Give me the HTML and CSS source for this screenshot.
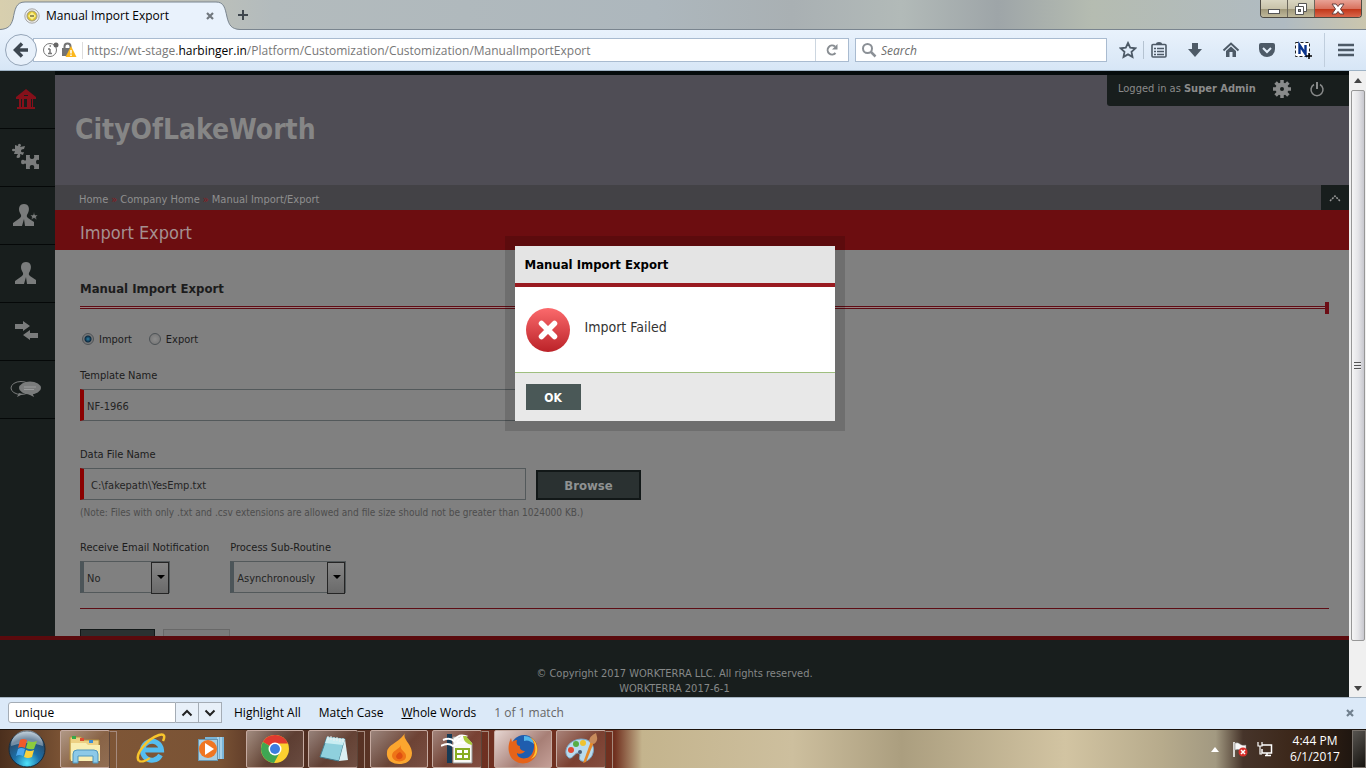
FILE: index.html
```html
<!DOCTYPE html>
<html lang="en">

<head>
    <meta charset="UTF-8">
    <meta name="viewport" content="width=device-width, initial-scale=1.0">
    <title>Manual Import Export</title>
    <link rel="stylesheet" href="styles.css">
</head>

<body>
    <div class="titlebar">
        <div class="tab">
            <svg class="tab-shape" viewBox="0 0 248 30" width="248" height="30">
                <path d="M0 29.5C8 29 11 26 13 19C15 9 16 2 25 2H216C224 2 225 8 227 17C229 25 231 29 240 29.5H248V30H0Z" fill="#e9f2fc" />
                <path d="M0 29.5C8 29 11 26 13 19C15 9 16 2 25 2H216C224 2 225 8 227 17C229 25 231 29 240 29.5H248" fill="none" stroke="#7a858f" />
            </svg>
            <svg class="favicon" viewBox="0 0 16 16" width="16" height="16">
                <circle cx="8" cy="8" r="7.200" fill="#ececea" stroke="#a7a7a7" />
                <circle cx="8" cy="8" r="5" fill="#e0c62c" stroke="#9c9880" />
                <path d="M8 4L12 8L8 12L4 8Z" fill="#f9ee8a" />
                <path d="M6 8H10" stroke="#77713f" stroke-width="1.500" />
            </svg>
            <span class="tab-title">Manual Import Export</span>
            <button class="plain" aria-label="Close tab"><svg viewBox="0 0 10 10" width="10" height="10"><path d="M2 2L8 8M8 2L2 8" stroke="#71787e" stroke-width="2.2" /></svg></button>
        </div>
        <button class="plain new-tab" aria-label="New tab"><svg viewBox="0 0 12 12" width="12" height="12"><path d="M6 1V11M1 6H11" stroke="#3e464d" stroke-width="2" /></svg></button>
        <div class="window-buttons">
            <button aria-label="Minimize"><svg viewBox="0 0 14 14" width="14" height="14"><rect x="1.500" y="7.500" width="11" height="4" fill="#fff" stroke="#555" /></svg></button>
            <button aria-label="Restore"><svg viewBox="0 0 14 14" width="14" height="14"><path d="M4.500 1.500H12.500V9.500H4.500Z" fill="#fff" stroke="#555" /><path d="M1.500 4.500H9.500V12.500H1.500Z" fill="#fff" stroke="#555" /><rect x="4.500" y="7.500" width="2" height="2" fill="#999" stroke="#555" /></svg></button>
            <button class="win-close" aria-label="Close"><svg viewBox="0 0 14 14" width="14" height="14"><path d="M1 2H5L7 4.500L9 2H13L9.500 7L13 12H9L7 9.500L5 12H1L4.500 7Z" fill="#fff" stroke="#664040" /></svg></button>
        </div>
    </div>

    <div class="navbar">
        <button class="back" aria-label="Back"><svg viewBox="0 0 16 16" width="16" height="16"><path d="M9 1.500L2.500 8L9 14.500M3 8H15" fill="none" stroke="#3c4650" stroke-width="3.500" /></svg></button>
        <div class="urlbar">
            <svg viewBox="0 0 16 16" width="16" height="16">
                <circle cx="7" cy="8" r="6.500" fill="none" stroke="#777" />
                <path d="M7 7V12M5 7H7M5 11.500H9M6.500 4H8" stroke="#777" stroke-width="1.500" />
                <circle cx="13" cy="3" r="2.500" fill="#666" />
            </svg>
            <svg class="lock" viewBox="0 0 16 16" width="16" height="16">
                <path d="M3.500 7V4.500A3 3 0 0 1 9.500 4.500V7" fill="none" stroke="#737373" stroke-width="2" />
                <rect x="1" y="6" width="10" height="8" fill="#737373" />
                <path d="M10 4L15.500 15H4.500Z" fill="#fbb71c" />
                <path d="M10 8V11.500M10 12.500V14" stroke="#fff" stroke-width="1.500" />
            </svg>
            <div class="url">https://wt-stage.<b>harbinger.in</b>/Platform/Customization/Customization/ManualImportExport</div>
            <button class="plain reload" aria-label="Reload"><svg viewBox="0 0 14 14" width="14" height="14"><path d="M10.500 10A4.500 4.500 0 1 1 10 3.500" fill="none" stroke="#888d92" stroke-width="2" /><path d="M7 6.500H12.500V1Z" fill="#888d92" /></svg></button>
        </div>
        <div class="searchbar">
            <svg viewBox="0 0 16 16" width="16" height="16"><circle cx="6.500" cy="6.500" r="4.500" fill="none" stroke="#8b9096" stroke-width="2" /><path d="M10 10L14.500 14.500" stroke="#8b9096" stroke-width="2.500" /></svg>
            <input type="text" placeholder="Search" aria-label="Search">
        </div>
        <div class="tools">
            <button class="plain" aria-label="Bookmark"><svg viewBox="0 0 18 18" width="18" height="18"><path d="M9 2L11.200 6.700L16.300 7.300L12.500 10.800L13.500 15.900L9 13.400L4.500 15.900L5.500 10.800L1.700 7.300L6.800 6.700Z" fill="none" stroke="#4d5a67" stroke-width="1.800" /></svg></button>
            <button class="plain list" aria-label="Show bookmarks"><svg viewBox="0 0 18 18" width="18" height="18"><path d="M3 3.500H15Q16 3.500 16 4.500V15Q16 16 15 16H3Q2 16 2 15V4.500Q2 3.500 3 3.500Z" fill="#e3eefa" stroke="#4d5a67" stroke-width="1.600" /><path d="M6 4V3Q6 1 9 1T12 3V4Z" fill="#4d5a67" /><path d="M4 7.500H6M7 7.500H14M4 10.500H6M7 10.500H14M4 13.500H6M7 13.500H14" stroke="#4d5a67" stroke-width="1.500" /></svg></button>
            <button class="plain" aria-label="Downloads"><svg viewBox="0 0 18 18" width="18" height="18"><path d="M6 2H12V8H16L9 16L2 8H6Z" fill="#4d5a67" /></svg></button>
            <button class="plain" aria-label="Home"><svg viewBox="0 0 18 18" width="18" height="18"><path d="M1.500 9.500L9 2.500L16.500 9.500" fill="none" stroke="#4d5a67" stroke-width="2" /><path d="M4 10L9 5.500L14 10V16H10.500V11H7.500V16H4Z" fill="#4d5a67" /></svg></button>
            <button class="plain" aria-label="Pocket"><svg viewBox="0 0 18 18" width="18" height="18"><path d="M3 2H15Q17 2 17 4V8A8 8 0 0 1 1 8V4Q1 2 3 2Z" fill="#4d5a67" /><path d="M5 7L9 11L13 7" fill="none" stroke="#e3eefa" stroke-width="2" /></svg></button>
            <button class="plain" aria-label="Capture"><svg viewBox="0 0 18 18" width="18" height="18"><rect x="1.500" y="1.500" width="14" height="14" fill="#fff" stroke="#222" stroke-dasharray="3 2" /><path d="M5.500 13V4L11.500 13V4" fill="none" stroke="#0a348c" stroke-width="2.400" /><path d="M15 12V18M12 15H18" stroke="#000" stroke-width="1.500" /></svg></button>
            <button class="plain menu" aria-label="Open menu"><svg viewBox="0 0 18 18" width="18" height="18"><path d="M1 4H17M1 9H17M1 14H17" stroke="#4d5a67" stroke-width="2.600" /></svg></button>
        </div>
    </div>

    <div class="viewport">
        <div class="page">
            <div class="page-body">
                <nav class="sidebar">
                    <a href="#" aria-label="Home"><svg viewBox="0 0 20 20" width="20" height="20"><path d="M10 0L20 8V10H17V18H19V20H1V18H3V10H0V8Z" fill="#85101a" /><path d="M5 10H6V18H5ZM8 10H11V18H8ZM8 6H12V7H8ZM15 10H16V18H15Z" fill="#181e1d" /></svg></a>
                    <a href="#" aria-label="Setup"><svg viewBox="0 0 28 28" width="28" height="28"><path d="M3 2L6 3Q6 0 8 1T8 4L13 3L12 6Q9 6 9 8T12 9L11 12L8 11Q9 15 6 15T6 11L2 11L3 8Q0 9 0 7T3 6Z" fill="#7a7c7c" /><path d="M14 12H18Q17 16 20 16T22 12H27V17Q24 16 24 19T27 21V26H22Q23 22 20 22T18 26H14V21Q13 20 12 21Q9 22 9 19T12 17Q13 18 14 17Z" fill="#7a7c7c" /></svg></a>
                    <a href="#" aria-label="Administrators"><svg viewBox="0 0 26 22" width="26" height="22"><path d="M11 0C16 0 17 5 15 9C14 11 13 12 15 14L21 18V22H12L11 15L9 22H0V19L7 14C9 12 8 11 7 9C5 5 6 0 11 0Z" fill="#7a7c7c" /><path d="M21 8L22 11H25L23 13L24 16L21 14L18 16L19 13L17 11H20Z" fill="#7a7c7c" stroke="#181e1d" stroke-width=".6" /></svg></a>
                    <a href="#" aria-label="Employees"><svg viewBox="0 0 22 22" width="22" height="22"><path d="M11 0C16 0 17 5 15 9C14 11 13 12 15 14L21 18V22H12L11 15L9 22H0V19L7 14C9 12 8 11 7 9C5 5 6 0 11 0Z" fill="#7a7c7c" /></svg></a>
                    <a href="#" aria-label="Import and export"><svg viewBox="0 0 24 20" width="24" height="20"><path d="M1 3H9V0L16 5L9 10V8H1ZM24 12H16V9L9 14L16 19V17H24Z" fill="#7a7c7c" /></svg></a>
                    <a href="#" aria-label="Messages"><svg viewBox="0 0 32 18" width="32" height="18"><ellipse cx="11" cy="8" rx="10" ry="6.500" fill="none" stroke="#7a7c7c" /><path d="M9 13L7 17L13 14" fill="#7a7c7c" /><ellipse cx="20" cy="8" rx="11" ry="6.500" fill="#7a7c7c" /><path d="M18 14L24 17L22 12" fill="#7a7c7c" /><path d="M14 7H26M14 9.500H24" stroke="#9a9c9c" /></svg></a>
                </nav>

                <div class="main">
                    <header class="banner">
                        <h1>CityOfLakeWorth</h1>
                        <div class="account">
                            <span>Logged in as <b>Super Admin</b></span>
                            <button class="plain" aria-label="Settings"><svg viewBox="0 0 18 18" width="18" height="18"><path d="M9 0V18M0 9H18M2.600 2.600L15.400 15.400M15.400 2.600L2.600 15.400" stroke="#898b8b" stroke-width="3.500" /><circle cx="9" cy="9" r="6.500" fill="#898b8b" /><circle cx="9" cy="9" r="2" fill="#181e1d" /></svg></button>
                            <button class="plain" aria-label="Log out"><svg viewBox="0 0 16 16" width="16" height="16"><path d="M5 3.500A6 6 0 1 0 11 3.500" fill="none" stroke="#898b8b" stroke-width="1.500" /><path d="M8 1V8" stroke="#898b8b" stroke-width="2" /></svg></button>
                        </div>
                    </header>
                    <div class="breadcrumb">
                        <a href="#">Home</a><i>»</i><a href="#">Company Home</a><i>»</i><a href="#">Manual Import/Export</a>
                        <button class="collapse" aria-label="Collapse header"><svg viewBox="0 0 12 8" width="12" height="8"><path d="M1 7L6 2L11 7" fill="none" stroke="#999" stroke-width="1.500" stroke-dasharray="2 1" /></svg></button>
                    </div>
                    <h2 class="page-title">Import Export</h2>

                    <form class="content">
                        <h3>Manual Import Export</h3>
                        <div class="double-rule"></div>
                        <div class="radios">
                            <label><input type="radio" name="mode" checked>Import</label>
                            <label><input type="radio" name="mode">Export</label>
                        </div>
                        <div class="field template">
                            <label for="template">Template Name</label>
                            <input type="text" id="template" class="required" value="NF-1966">
                        </div>
                        <div class="field">
                            <label for="datafile">Data File Name</label>
                            <div class="file-row">
                                <input type="text" id="datafile" class="required file" value="C:\fakepath\YesEmp.txt">
                                <button type="button" class="browse">Browse</button>
                            </div>
                        </div>
                        <p class="note">(Note: Files with only .txt and .csv extensions are allowed and file size should not be greater than 1024000 KB.)</p>
                        <div class="selects">
                            <div class="field">
                                <label for="notify">Receive Email Notification</label>
                                <div class="select notify"><select id="notify"><option>No</option></select></div>
                            </div>
                            <div class="field">
                                <label for="routine">Process Sub-Routine</label>
                                <div class="select routine"><select id="routine"><option>Asynchronously</option></select></div>
                            </div>
                        </div>
                        <div class="actions">
                            <button type="button" class="submit" aria-label="Submit"></button>
                            <button type="button" class="cancel" aria-label="Cancel"></button>
                        </div>
                    </form>
                </div>
            </div>

            <footer class="footer">
                <p>© Copyright 2017 WORKTERRA LLC. All rights reserved.</p>
                <p>WORKTERRA 2017-6-1</p>
            </footer>

            <div class="overlay">
                <div class="dialog" role="dialog" aria-labelledby="dialog-title">
                    <h4 id="dialog-title">Manual Import Export</h4>
                    <div class="dialog-body">
                        <svg viewBox="0 0 44 44" width="44" height="44">
                            <defs>
                                <linearGradient id="err" x1="0" y1="0" x2="0" y2="1">
                                    <stop offset="0" stop-color="#fb6a6c" />
                                    <stop offset="1" stop-color="#bb2228" />
                                </linearGradient>
                            </defs>
                            <circle cx="22" cy="22" r="22" fill="url(#err)" />
                            <path d="M15.500 15.500L28.500 28.500M28.500 15.500L15.500 28.500" stroke="#fff" stroke-width="5.500" stroke-linecap="round" />
                        </svg>
                        <p>Import Failed</p>
                    </div>
                    <div class="dialog-foot"><button class="ok">OK</button></div>
                </div>
            </div>
        </div>

        <div class="scrollbar">
            <svg viewBox="0 0 8 5" width="8" height="5"><path d="M4 0L8 5H0Z" fill="#444" /></svg>
            <div class="thumb"><span></span><span></span><span></span></div>
            <svg viewBox="0 0 8 5" width="8" height="5"><path d="M0 0H8L4 5Z" fill="#444" /></svg>
        </div>
    </div>

    <div class="findbar">
        <div class="find-group">
            <input type="text" value="unique" aria-label="Find in page">
            <button aria-label="Previous"><svg viewBox="0 0 12 8" width="12" height="8"><path d="M1.500 6.500L6 2L10.500 6.500" fill="none" stroke="#222" stroke-width="2" /></svg></button>
            <button aria-label="Next"><svg viewBox="0 0 12 8" width="12" height="8"><path d="M1.500 1.500L6 6L10.500 1.500" fill="none" stroke="#222" stroke-width="2" /></svg></button>
        </div>
        <button class="plain">High<u>l</u>ight All</button>
        <button class="plain">Mat<u>c</u>h Case</button>
        <button class="plain"><u>W</u>hole Words</button>
        <span class="matches">1 of 1 match</span>
        <button class="plain find-close" aria-label="Close find bar"><svg viewBox="0 0 10 10" width="10" height="10"><path d="M2 2L8 8M8 2L2 8" stroke="#71808e" stroke-width="2.200" /></svg></button>
    </div>

    <div class="taskbar">
        <button class="start" aria-label="Start"><svg viewBox="0 0 38 38" width="38" height="38">
            <defs>
                <radialGradient id="orb" cx=".5" cy=".9" r=".9">
                    <stop offset="0" stop-color="#4fe3fa" />
                    <stop offset=".4" stop-color="#1b6fa8" />
                    <stop offset=".75" stop-color="#284e70" />
                    <stop offset="1" stop-color="#a9bfce" />
                </radialGradient>
            </defs>
            <circle cx="19" cy="19" r="18" fill="url(#orb)" stroke="#142c40" />
            <path d="M3 16A16 16 0 0 1 35 16Q19 10 3 16Z" fill="#fff" opacity=".35" />
            <path d="M12 10Q15 8 19 10L17 18Q13 16 10 18Z" fill="#f2592b" />
            <path d="M20 11Q24 13 29 11L26 19Q22 20 18 18Z" fill="#8ccb3d" />
            <path d="M10 19Q13 17 17 19L15 26Q11 24 8 26Z" fill="#4ca8ee" />
            <path d="M18 20Q22 22 26 20L24 27Q20 29 16 27Z" fill="#fbd13b" />
        </svg></button>

        <button class="task stacked" aria-label="Explorer"><svg viewBox="0 0 34 30" width="34" height="30">
            <path d="M2 3H13L15 6H31V26H2Z" fill="#ecd083" stroke="#b08f3d" />
            <path d="M4 2H8V5H4Z" fill="#35a94a" /><path d="M12 4H16V7H12Z" fill="#dd4c30" /><path d="M21 6H25V9H21Z" fill="#3b8fd6" />
            <path d="M3 9H18L20 11H32V27H3Z" fill="#f8eeb3" />
            <path d="M5 29V20Q5 16 9 16H26Q30 16 30 20V29H25V22H10V29Z" fill="#8cc9e8" stroke="#4f96bd" />
        </svg></button>
        <button class="launch ie" aria-label="Internet Explorer"><svg viewBox="0 0 32 32" width="32" height="32">
            <path d="M25.500 22A9.500 9.500 0 1 1 26.500 17H9" fill="none" stroke="#55bdf0" stroke-width="5" />
            <path d="M4 28C-1 22 12 6 24 2C30 0 30 4 28 8" fill="none" stroke="#f8c52c" stroke-width="2.500" />
            <path d="M4 28C8 30 12 27 15 25" fill="none" stroke="#f8c52c" stroke-width="2" />
        </svg></button>
        <button class="launch wmp" aria-label="Media Player"><svg viewBox="0 0 28 28" width="28" height="28">
            <path d="M8 2H27V24H8Z" fill="#79b5d8" /><path d="M24 2V24M21 2V24" stroke="#d6edf8" />
            <rect x="1.500" y="4.500" width="19" height="21" fill="#a9cfe2" stroke="#6897b1" />
            <circle cx="11" cy="14" r="9" fill="#ef7622" /><path d="M8 8L17 14L8 20Z" fill="#fff" />
        </svg></button>
        <button class="task wide" aria-label="Chrome"><svg viewBox="0 0 30 30" width="30" height="30">
            <circle cx="15" cy="15" r="14" fill="#fbd02f" />
            <path d="M15 15L2.900 8A14 14 0 0 1 27.900 9.500H15Z" fill="#e03a2f" />
            <path d="M15 15L2.900 8A14 14 0 0 0 14 29L20 18Z" fill="#3fa653" />
            <circle cx="15" cy="15" r="6.500" fill="#fff" /><circle cx="15" cy="15" r="5" fill="#3b7de0" />
        </svg></button>
        <button class="task stacked" aria-label="Notepad"><svg viewBox="0 0 32 32" width="32" height="32">
            <path d="M10 4L28 6L22 28L3 24Z" fill="#8fd0dd" stroke="#437f91" /><path d="M22 28L28 6L31 27Z" fill="#dceff3" />
            <path d="M10 4L28 6L26 12L8 10Z" fill="#c9edf2" />
            <path d="M11 3V7M14 3V7M17 4V8M20 4V8M23 5V9M26 5V9" stroke="#eee" />
        </svg></button>
        <button class="task wide" aria-label="Burner"><svg viewBox="0 0 28 32" width="28" height="32">
            <path d="M20 0C17 6 27 11 27 20C27 28 21 31 14 31C6 31 1 26 2 19C3 11 14 10 20 0Z" fill="#fba62f" />
            <path d="M16 12C14 18 22 18 21 24C20 30 8 30 7 23C7 17 14 17 16 12Z" fill="#ee7417" />
            <path d="M15 19Q11 21 11 24Q13 28 17 25Q19 22 15 19Z" fill="#df4f11" />
        </svg></button>
        <button class="task stacked" aria-label="Spreadsheet"><svg viewBox="0 0 32 32" width="32" height="32">
            <path d="M6 1H11V30H6Z" fill="#173a55" /><path d="M12 4H25L31 10V30H12Z" fill="#f8f8f4" stroke="#999" />
            <path d="M2 7Q9 4 13 8Q17 1 24 3Q18 5 16 9M0 13Q7 9 12 13Q18 8 24 10" fill="none" stroke="#fff" stroke-width="2" />
            <path d="M22 3H25L31 10V12Q23 11 22 3Z" fill="#a9c93a" />
            <path d="M14 15H29V27H14Z" fill="#88ad22" /><path d="M16 17H21V20H16ZM23 17H27V20H23ZM16 22H21V25H16ZM23 22H27V25H23Z" fill="#fff" />
        </svg></button>
        <button class="task wide active" aria-label="Firefox"><svg viewBox="0 0 32 32" width="32" height="32">
            <circle cx="17" cy="15" r="13" fill="#1f5dae" /><path d="M17 3Q26 3 28 12Q22 6 17 8Z" fill="#53b7ec" />
            <path d="M23 4C29 8 28 20 22 24C17 27 10 25 10 20C13 22 17 20 18 18C15 18 12 16 13 13C10 13 9 10 10 7C8 7 6 8 5 9L4 5C-1 15 2 26 10 29C18 33 28 28 30 20C32 13 29 7 23 4Z" fill="#e66319" />
            <path d="M23 4C30 9 30 21 24 26C29 24 31 19 30 14C29 9 27 6 23 4Z" fill="#fcc834" />
        </svg></button>
        <button class="task stacked" aria-label="Paint"><svg viewBox="0 0 34 32" width="34" height="32">
            <path d="M17 6C27 6 31 13 29 20C27 28 19 30 16 27C14 24 18 22 14 20C11 19 9 26 5 25C-2 20 3 7 17 6Z" fill="#b9dbef" stroke="#7aa6c4" />
            <circle cx="7" cy="17" r="3" fill="#e24932" /><circle cx="12" cy="11" r="3" fill="#54ad45" /><circle cx="19" cy="10" r="3" fill="#f0c32f" /><circle cx="16" cy="19" r="2" fill="#485d76" />
            <path d="M27 8L19 30L22 29L30 9Z" fill="#e5892a" /><path d="M25 9Q25 3 32 0L33 4Q34 8 30 11Z" fill="#c78b5c" />
        </svg></button>

        <div class="tray">
            <button class="plain" aria-label="Show hidden icons"><svg viewBox="0 0 8 5" width="8" height="5"><path d="M4 0L8 5H0Z" fill="#fff" /></svg></button>
            <svg viewBox="0 0 16 16" width="16" height="16"><path d="M2 1V16" stroke="#fff" stroke-width="1.500" /><path d="M3 2Q6 1 8 3T14 4V10Q10 10 8 9T3 9Z" fill="#f8f8f8" stroke="#777" stroke-width=".5" /><circle cx="11" cy="11" r="4.500" fill="#d62f2b" /><path d="M9 9L13 13M13 9L9 13" stroke="#fff" stroke-width="1.500" /></svg>
            <svg viewBox="0 0 16 16" width="16" height="16"><path d="M5 4H14.500V12H5V8M8 14.500H14M10 12V14" fill="none" stroke="#fff" stroke-width="1.500" /><path d="M1 1V5H5V1M3 5V13H5" fill="none" stroke="#fff" stroke-width="1.200" /></svg>
            <div class="clock"><span>4:44 PM</span><span>6/1/2017</span></div>
            <button class="show-desktop" aria-label="Show desktop"></button>
        </div>
    </div>
</body>

</html>
```
FILE: styles.css
```css
* {
    box-sizing: border-box;
}

body {
    margin: 0;
    height: 100vh;
    display: flex;
    flex-direction: column;
    overflow: hidden;
    font-family: "Open Sans", "Noto Sans", sans-serif;
    font-size: 12px;
    color: #000;
}

h1,
h2,
h3,
h4,
p {
    margin: 0;
}

svg {
    display: block;
    flex: none;
}

button,
input,
select {
    font-family: inherit;
    font-size: inherit;
    color: inherit;
    padding: 0;
    border-radius: 0;
}

a {
    color: inherit;
    text-decoration: none;
}

button {
    display: flex;
    align-items: center;
    justify-content: center;
}

.plain {
    display: block;
    border: 0;
    background: none;
}

/* Window title bar */

.titlebar {
    height: 30px;
    flex: none;
    display: flex;
    align-items: center;
    border-bottom: 1px solid #7a858f;
    background: linear-gradient(90deg, #d8cfae 0, #b3bbbd 20%, #adb7bd 48%, #a9b0b3 58%, #b2bab8 66%, #9ea5a8 73%, #b5bcb1 80%, #b0bbc2 94%, #cbc6ae 100%);
}

.tab {
    position: relative;
    width: 227px;
    height: 30px;
    padding: 2px 12px 0 24px;
    display: flex;
    align-items: center;
}

.tab-shape {
    position: absolute;
    left: 0;
    top: 0;
}

.favicon,
.tab-title,
.tab .plain {
    position: relative;
}

.tab-title {
    flex: 1;
    margin-left: 6px;
    white-space: nowrap;
}

.new-tab {
    margin-left: 10px;
}

.window-buttons {
    display: flex;
    align-self: flex-start;
    margin: 0 4px 0 auto;
    border: 1px solid #4d4a43;
    border-top: 0;
    border-radius: 0 0 4px 4px;
    overflow: hidden;
}

.window-buttons button {
    width: 27px;
    height: 17px;
    border: 0;
    border-right: 1px solid #6b675c;
    background: linear-gradient(#dad6c2 0, #c9c3aa 50%, #9e9678 52%, #bfb89a 100%);
}

.window-buttons .win-close {
    width: 46px;
    border-right: 0;
    background: linear-gradient(#e8a295 0, #d9735f 50%, #c03417 52%, #d9664b 100%);
}

/* Navigation bar */

.navbar {
    height: 41px;
    flex: none;
    display: flex;
    align-items: center;
    padding: 0 11px 0 5px;
    border-bottom: 1px solid #9fb3c5;
    background: linear-gradient(#e9f2fc, #d7e6f6);
}

.back {
    position: relative;
    width: 32px;
    height: 32px;
    border: 1px solid #95a5b8;
    border-radius: 50%;
    background: #e7f0fa;
}

.urlbar,
.searchbar {
    height: 24px;
    display: flex;
    align-items: center;
    border: 1px solid #a9bbd0;
    background: #fff;
}

.urlbar {
    flex: 1;
    min-width: 0;
    margin-left: -4px;
    padding-left: 9px;
}

.lock {
    margin-left: 2px;
}

.url {
    flex: 1;
    min-width: 0;
    margin-left: 5px;
    padding-left: 4px;
    border-left: 1px solid #ddd;
    overflow: hidden;
    white-space: nowrap;
    color: #777;
}

.url b {
    font-weight: normal;
    color: #000;
}

.reload {
    padding: 4px 9px;
    border-left: 1px solid #ccd6e0;
}

.searchbar {
    width: 252px;
    margin-left: 6px;
    padding-left: 5px;
}

.searchbar input {
    flex: 1;
    min-width: 0;
    margin-left: 4px;
    border: 0;
    outline: 0;
    background: none;
}

.searchbar input::placeholder {
    color: #6d6d6d;
    font-style: italic;
}

.tools {
    display: flex;
    align-items: center;
    gap: 18px;
    margin-left: 12px;
}

.tools .list {
    margin-left: -12px;
    padding-left: 6px;
    border-left: 1px solid #b5c3d1;
}

.tools .menu {
    margin-left: -6px;
    padding: 8px 0 8px 12px;
    border-left: 1px solid #c0cedd;
}

/* Web page */

.viewport {
    flex: 1;
    min-height: 0;
    display: flex;
}

.page {
    position: relative;
    flex: 1;
    min-width: 0;
    display: flex;
    flex-direction: column;
    font-family: "DejaVu Sans Condensed", "DejaVu Sans", sans-serif;
    font-size: 11px;
    color: #1c1c1c;
    background: #808080;
}

.page-body {
    flex: 1;
    min-height: 0;
    display: flex;
    overflow: hidden;
}

.sidebar {
    width: 55px;
    flex: none;
    background: #181e1d;
}

.sidebar a {
    height: 58px;
    display: flex;
    align-items: center;
    justify-content: center;
    border-bottom: 1px solid #050808;
    padding: 0 4px 2px 0;
}

.main {
    flex: 1;
    min-width: 0;
}

.banner {
    height: 114px;
    display: flex;
    justify-content: space-between;
    border-top: 4px solid #050b0c;
    background: #4f4d55;
    color: #8b8b8b;
}

.banner h1 {
    padding: 39px 0 0 20px;
    font-size: 28px;
    line-height: 32px;
    color: #868686;
}

.account {
    width: 242px;
    height: 31px;
    padding: 0 24px 4px 11px;
    display: flex;
    align-items: center;
    justify-content: space-between;
    border-radius: 0 0 0 3px;
    background: #181e1d;
}

.breadcrumb {
    height: 25px;
    padding-left: 24px;
    display: flex;
    align-items: center;
    gap: 3px;
    line-height: 25px;
    background: #434246;
    color: #8f8f8f;
}

.breadcrumb a,
.breadcrumb i {
    padding-top: 3px;
}

.breadcrumb i {
    font-style: normal;
    color: #8a1a20;
}

.collapse {
    width: 28px;
    height: 25px;
    margin-left: auto;
    border: 0;
    background: #181e1d;
}

.page-title {
    height: 40px;
    padding: 3px 0 0 25px;
    font-size: 18px;
    line-height: 40px;
    font-weight: normal;
    background: #6c0d10;
    color: #a59090;
}

.content {
    padding: 31px 20px 0 25px;
}

.content h3 {
    font-size: 13px;
    line-height: 16px;
}

.double-rule {
    height: 12px;
    margin-top: 5px;
    border-right: 4px solid #6c0d15;
    background: linear-gradient(transparent 4px, #5e0d15 4px, #5e0d15 5px, #958080 5px, #958080 6px, #5e0d15 6px, #5e0d15 7px, transparent 7px);
}

.radios {
    display: flex;
    gap: 17px;
    margin-top: 18px;
    padding-left: 2px;
    line-height: 16px;
}

.radios label {
    display: flex;
    align-items: center;
    gap: 5px;
}

.radios input {
    appearance: none;
    width: 12px;
    height: 12px;
    margin: 0 0 2px;
    border: 1px solid #4d5256;
    border-radius: 50%;
    background: radial-gradient(#8c8c8c, #727272);
}

.radios input:checked {
    background: radial-gradient(#2d7fa4 0, #0d2a40 3px, #777 4px);
}

.field label {
    display: block;
    line-height: 14px;
    margin-bottom: 6px;
    white-space: nowrap;
}

.template {
    margin-top: 21px;
    margin-bottom: 27px;
}

.required,
.select select {
    height: 32px;
    padding-top: 2px;
    border: 1px solid #53595b;
    background: #808080;
    color: #242424;
}

.required {
    display: block;
    width: 446px;
    padding-left: 3px;
    border-left: 4px solid #8b0000;
}

.file {
    padding-left: 7px;
}

.file-row {
    display: flex;
    align-items: flex-end;
    gap: 10px;
}

.browse {
    width: 105px;
    height: 30px;
    border: 2px solid #121818;
    background: #2a3131;
    color: #8f9292;
    font-size: 13px;
    font-weight: bold;
}

.note {
    margin-top: 5px;
    line-height: 16px;
    font-size: 10px;
    color: #4d4d4d;
}

.selects {
    display: flex;
    gap: 21px;
    margin-top: 20px;
    padding-bottom: 15px;
    border-bottom: 1px solid #5e0d15;
}

.select {
    position: relative;
}

.notify {
    width: 90px;
}

.routine {
    width: 116px;
}

.select select {
    appearance: none;
    width: 100%;
    padding-left: 3px;
    border-left: 4px solid #4c5559;
}

/* drop-down arrow */
.select::before {
    content: "";
    position: absolute;
    top: 1px;
    right: 1px;
    width: 16px;
    height: 30px;
    border: 1px solid #252525;
    background: linear-gradient(#868686, #6a6a6a);
    pointer-events: none;
    z-index: 1;
}

.select::after {
    content: "";
    position: absolute;
    top: 14px;
    right: 5px;
    border: 4px solid transparent;
    border-top-color: #000;
    border-bottom: 0;
    pointer-events: none;
    z-index: 1;
}

.actions {
    display: flex;
    gap: 8px;
    margin-top: 20px;
}

.submit {
    width: 75px;
    height: 30px;
    border: 1px solid #121818;
    background: #2a3131;
}

.cancel {
    width: 67px;
    height: 30px;
    border: 1px solid #686868;
    background: #7a7a7a;
}

.footer {
    flex: none;
    height: 61px;
    padding-top: 26px;
    border-top: 4px solid #5a0a0d;
    background: #181e1d;
    color: #858888;
    line-height: 15px;
    text-align: center;
}

/* Message dialog */

.overlay {
    position: absolute;
    inset: 0;
    z-index: 2;
    display: flex;
    align-items: flex-start;
    justify-content: center;
    padding-top: 165px;
}

.dialog {
    width: 340px;
    border: 10px solid rgba(0, 0, 0, 0.14);
    background: #e8e8e8;
    background-clip: padding-box;
}

.dialog h4 {
    padding: 1px 0 0 10px;
    font-size: 13px;
    line-height: 36px;
    border-bottom: 4px solid #991a20;
    background: #e4e4e4;
    color: #000;
}

.dialog-body {
    height: 85px;
    display: flex;
    align-items: center;
    gap: 15px;
    padding-left: 11px;
    background: #fff;
    color: #333;
}

.dialog-body p {
    padding-bottom: 5px;
    font-size: 14px;
}

.dialog-foot {
    padding: 11px;
    border-top: 1px solid #9fbf7f;
}

.ok {
    width: 55px;
    height: 26px;
    padding-top: 1px;
    border: 0;
    background: #4a5857;
    color: #fff;
    font-size: 12px;
    font-weight: bold;
}

.scrollbar {
    width: 17px;
    flex: none;
    display: flex;
    flex-direction: column;
    align-items: center;
    padding: 7px 0 6px;
    background: #f0f0f0;
}

.thumb {
    width: 14px;
    flex: 1;
    margin: 7px 0 45px;
    display: flex;
    flex-direction: column;
    align-items: center;
    justify-content: center;
    gap: 1px;
    border: 1px solid #979797;
    border-radius: 2px;
    background: linear-gradient(90deg, #f5f5f5, #e5e5e8 50%, #c8c8cf);
}

.thumb span {
    width: 7px;
    height: 2px;
    background: #555;
    border-bottom: 1px solid #eee;
}

/* Find bar */

.findbar {
    height: 32px;
    flex: none;
    display: flex;
    align-items: center;
    gap: 18px;
    padding: 0 11px 2px 8px;
    border-top: 1px solid #a5b4c2;
    background: #dbe9f8;
}

.find-group {
    display: flex;
    margin-right: -6px;
}

.find-group input {
    width: 168px;
    height: 21px;
    padding: 0 6px;
    border: 1px solid #a4acb5;
    border-radius: 3px 0 0 3px;
    background: #fff;
}

.find-group button {
    width: 23px;
    height: 21px;
    border: 1px solid #a4acb5;
    border-left: 0;
    background: #e8f0f9;
}

.matches {
    color: #666;
}

.find-close {
    margin-left: auto;
}

/* Taskbar */

.taskbar {
    height: 39px;
    flex: none;
    display: flex;
    align-items: center;
    gap: 4px;
    padding-left: 8px;
    border-top: 1px solid #1b120c;
    background: linear-gradient(90deg, #4b2f1d 0, #805737 5%, #7a5335 16%, #4d2c20 20%, #5b3425 28%, #6f3021 36%, #70301f 45%, #c4b48d 47%, #cdbf9e 58%, #ab9e7f 66%, #d2c4a2 78%, #b7ab8c 85%, #a29981 89%, #46342a 91%, #3b2618 95%, #18120e 100%);
}

.start,
.launch {
    border: 0;
    background: none;
}

.start {
    width: 38px;
    height: 38px;
    margin-right: 10px;
}

.task {
    position: relative;
    width: 50px;
    height: 38px;
    border: 1px solid #c5aaa0;
    border-radius: 2px;
    background: linear-gradient(135deg, rgba(255, 255, 255, 0.4), rgba(255, 255, 255, 0.08) 55%, rgba(255, 255, 255, 0.14));
}

.wide {
    width: 58px;
}

/* grouped windows show as extra edges on the right */
.stacked {
    margin-right: 8px;
}

.stacked::after {
    content: "";
    position: absolute;
    top: 0;
    right: -8px;
    width: 6px;
    height: 36px;
    border: 1px solid #a58a7d;
    border-left-color: #5c4438;
}

.active {
    background: linear-gradient(135deg, #e6d6d2, #a77f76 60%, #c49f97);
}

.ie {
    width: 50px;
    margin-left: 4px;
}

.wmp {
    width: 62px;
}

.tray {
    display: flex;
    align-items: center;
    align-self: stretch;
    gap: 9px;
    margin-left: auto;
    color: #fff;
}

.tray .plain {
    margin-right: 4px;
}

.clock {
    width: 66px;
    margin-right: -5px;
    display: flex;
    flex-direction: column;
    align-items: center;
    line-height: 16px;
}

.show-desktop {
    width: 14px;
    align-self: stretch;
    border: 1px solid #77706a;
    background: linear-gradient(135deg, #575450, #16130f);
}
```
